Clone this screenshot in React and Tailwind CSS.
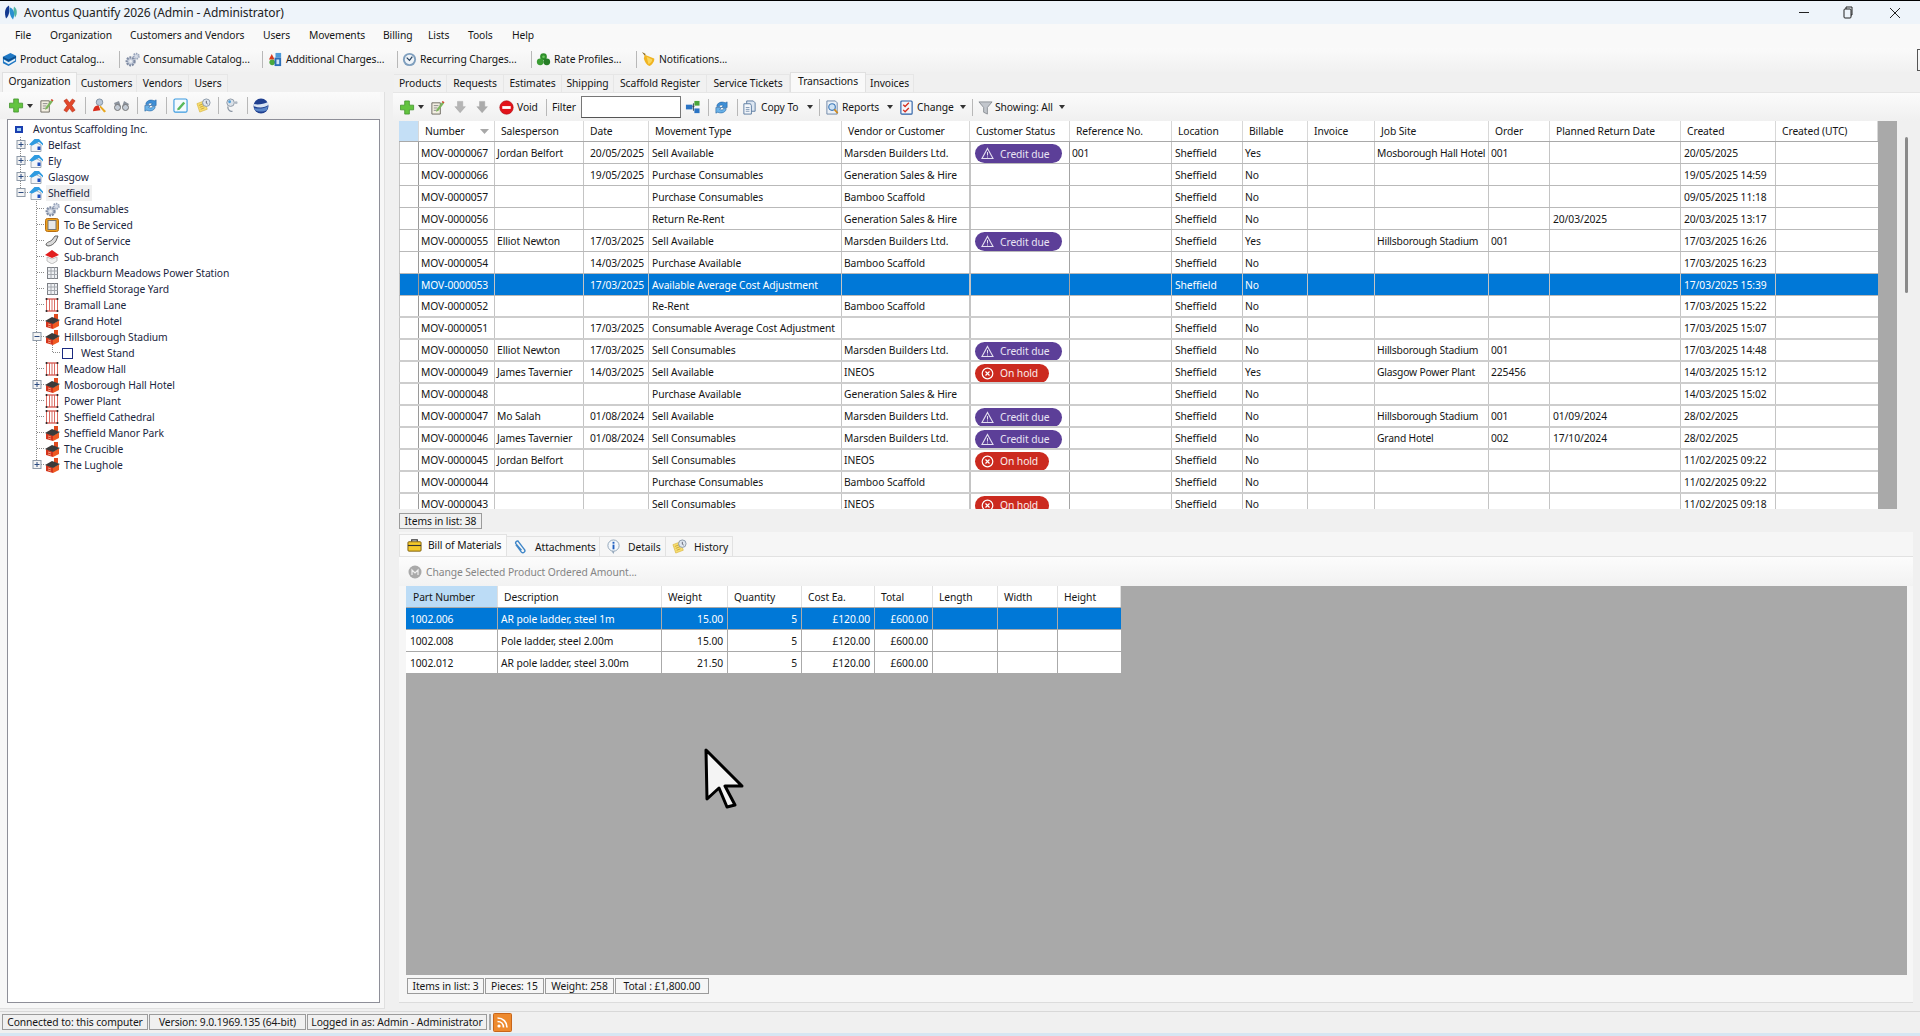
import React from 'react';

const S = ({ w = 15, h = 15, vb = '0 0 16 16', children }) => (
  <svg width={w} height={h} viewBox={vb} className="shrink-0 block">{children}</svg>
);

const Logo = () => <S w={16} h={17}><path d="M6 1C2 3 1 8 3 14c3-2 4-8 3-13z" fill="#12388f"/><path d="M7 3c3 1 6 5 3 12-3-3-4-8-3-12z" fill="#2a8fd0"/><path d="M11 2c3 2 4 7 1 11-1-3-2-8-1-11z" fill="#4fb3a2"/></S>;
const Book = () => <S><path d="M1 5l8-4 6 3v6l-8 5-6-3z" fill="#1f78c4"/><path d="M1 5l6 3 8-4v2L7 10 1 7z" fill="#0c4f8e"/><path d="M2 8l5 3 7-4v2l-7 4-5-3z" fill="#e8f1f8"/></S>;
const Gears = () => <S><circle cx="6" cy="10" r="4.2" fill="#c5cddb" stroke="#7f8ba3" strokeWidth="2.4" strokeDasharray="2 1"/><circle cx="12" cy="4.5" r="2.8" fill="#d5dbe6" stroke="#98a4bb" strokeWidth="2" strokeDasharray="1.5 1"/><circle cx="6" cy="10" r="1.4" fill="#eef1f5"/></S>;
const Shapes = () => <S><path d="M1 8l3-6 3 6z" fill="#d93a1e"/><path d="M8 1h6v5H8z" fill="#4d9ad8"/><circle cx="4.5" cy="11" r="3" fill="#4aa83c"/><path d="M7 6h7v9H7z" fill="#2c6fb8"/><path d="M9 8h3v5H9z" fill="#cfe3f5"/></S>;
const Clock = () => <S><circle cx="8" cy="8" r="7" fill="#7f9fbe"/><circle cx="8" cy="8" r="5" fill="#eef3f8"/><path d="M5 6l3 3 3-4" fill="none" stroke="#27425f" strokeWidth="1.3"/></S>;
const Clover = () => <S><circle cx="8" cy="5" r="3.6" fill="#2f8f2c"/><circle cx="4.5" cy="10.5" r="3.6" fill="#3a9c33"/><circle cx="11.5" cy="10.5" r="3.6" fill="#267d26"/><circle cx="8" cy="5" r="1.4" fill="#6cc85e"/></S>;
const Bell = () => <S><path d="M1 0l4 2-1 2z" fill="#8a6a20"/><path d="M4 3l10 4c1 2-2 7-5 8-3-1-5-4-6-8z" fill="#f0b422"/><path d="M6 5l6 3c0 2-2 4-4 5z" fill="#fad65c"/></S>;
const Plus = () => <S w={15} h={15}><path d="M5 1h5v4.500h4.500v5H10V15H5v-4.500H.5v-5H5z" fill="#63c440" stroke="#3b8f26" strokeWidth=".8"/></S>;
const Caret = () => <svg width="6" height="4" viewBox="0 0 6 4" className="shrink-0 block"><path d="M0 0h6L3 4z" fill="#333"/></svg>;
const EditNote = () => <S><path d="M2 3h9v12H2z" fill="#f3efe2" stroke="#6d6a60"/><path d="M4 6h5M4 8.500h4M4 11h3" stroke="#888"/><path d="M7 10l6-8 2 1.500-6 8-2.500 1z" fill="#7cb55c"/><path d="M12.500 2l1-1 2 1.500-1 1z" fill="#d6412a"/></S>;
const RedX = () => <S><path d="M2 3l3-2 3 4 3-4 3 2-3.500 5L14 13l-3 2-3-4-3 4-3-2 3.500-5z" fill="#e2482b" stroke="#b22d15" strokeWidth=".6"/></S>;
const UserSearch = () => <S><circle cx="8" cy="4.500" r="3.500" fill="#b8c6d6" stroke="#7f8fa1"/><path d="M1 14c1-5 3-6 6-6l2 5z" fill="#d92d1c"/><path d="M9 8l6 6-2 1.500-5-6z" fill="#e9a71e"/></S>;
const Binoc = () => <S w={17} h={13} vb="0 0 17 13"><path d="M1 4l5-2 2 6-4 3zM16 5l-5-3-2 6 3 3z" fill="#8b929c"/><circle cx="4.500" cy="8.500" r="3" fill="#c4ccd6" stroke="#777"/><circle cx="12.500" cy="8.500" r="3" fill="#c4ccd6" stroke="#777"/></S>;
const Refresh = () => <S><path d="M3 7c0-4 5-6 9-4l2-1v6h-6l2-2c-2-1-4-1-4 1z" fill="#3f8fd6" stroke="#1d5f9e" strokeWidth=".6"/><path d="M13 9c0 4-5 6-9 4l-2 1V8h6l-2 2c2 1 4 1 4-1z" fill="#6ab2e8" stroke="#1d5f9e" strokeWidth=".6"/></S>;
const EditBlue = () => <S><rect x="1" y="1" width="14" height="14" rx="1.500" fill="#f4fafe" stroke="#3a9ae0" strokeWidth="1.200"/><path d="M5 11l6-7 2 1.500-6 7-2.500.5z" fill="#58b85a"/></S>;
const NoteClock = () => <S><path d="M1 6l8-3 3 9-8 3z" fill="#f7de72" stroke="#d5ab2a" strokeWidth=".6"/><path d="M3 8l5-2M4 10l5-2M5 12l4-1.500" stroke="#b8901c" strokeWidth=".7"/><circle cx="11" cy="5" r="4" fill="#dfe6ee" stroke="#8a97a8"/><path d="M11 3v2.500l1.500 1" stroke="#445" fill="none" strokeWidth=".8"/></S>;
const Steth = () => <S><circle cx="7" cy="5" r="4" fill="#dbe1e8" stroke="#8c96a3"/><path d="M4 9c0 4 3 6 5 5" stroke="#8c96a3" fill="none" strokeWidth="1.400"/><circle cx="13" cy="5" r="1.500" fill="#aeb7c2"/><circle cx="6" cy="4" r="1.500" fill="#55a0d8"/></S>;
const Globe = () => <S w={16} h={16}><circle cx="8" cy="8" r="7.500" fill="#1f3f8f"/><path d="M1 6c4 1 10 0 14-2l.5 3c-4 3-10 3-15 1z" fill="#d8e4f3"/><path d="M1 10c4 1 10 1 14-2l-1 4c-3 2-9 2-12 0z" fill="#5a86c8"/></S>;
const Down = ({ c = '#b5b5b5' }) => <S w={14} h={15}><path d="M4 1h6v6h3l-6 7-6-7h3z" fill={c} stroke="#a0a0a0" strokeWidth=".5"/></S>;
const Void = () => <S><circle cx="8" cy="8" r="7.200" fill="#e2131a" stroke="#a90d12" strokeWidth=".6"/><rect x="3.500" y="6.500" width="9" height="3" fill="#fff"/></S>;
const Net = () => <S><rect x="1" y="5" width="7" height="5" fill="#2a74c4"/><rect x="10" y="1" width="5.500" height="5" fill="#4aa53a"/><rect x="10" y="9" width="5.500" height="5" fill="#2a74c4"/><path d="M8 7h2M9 3.500v8" stroke="#345" fill="none"/></S>;
const CopyDoc = () => <S><path d="M5 1h7l2 2v9H5z" fill="#dce6f2" stroke="#5c7ba0"/><path d="M2 4h7l1 2v9H2z" fill="#f4f7fb" stroke="#5c7ba0"/><path d="M4 8h4M4 10h4M4 12h4" stroke="#7d95b3"/></S>;
const Reports = () => <S><path d="M2 1h9l2 2v12H2z" fill="#eaf0f7" stroke="#6f88a8"/><circle cx="7.500" cy="7.500" r="3.500" fill="#cfe3f5" stroke="#3c78b8" strokeWidth="1.200"/><path d="M10 10l3.500 4" stroke="#d08a1e" strokeWidth="1.800"/></S>;
const Change = () => <S><rect x="2" y="1" width="12" height="14" rx="1" fill="#f4f6fa" stroke="#2a5fa5" strokeWidth="1.200"/><path d="M4.500 5l2 2 4-4M4.500 10.500l2 2 4-4" fill="none" stroke="#d52d1f" strokeWidth="1.400"/></S>;
const Funnel = () => <S><path d="M1 2h14l-5 6v7l-4-2V8z" fill="#c2c6cc" stroke="#7a7f86" strokeWidth=".8"/></S>;

const House = () => <S w={14} h={14} vb="0 0 14 14"><path d="M2 7.500l5-3 5 2.500v6.500H2z" fill="#f2f5f8" stroke="#8b98a6" strokeWidth=".8"/><path d="M0 6.500L5.500 1H10l4 4.500V7.500L10 4 3 7.500z" fill="#2f9be0"/><rect x="8.500" y="8.500" width="3" height="3.500" fill="#1d4fc0"/></S>;
const ToService = () => <S w={14} h={14} vb="0 0 14 14"><rect x=".5" y=".5" width="13" height="13" rx="2" fill="#eda01e" stroke="#b96f10"/><rect x="3" y="2.500" width="8" height="9" fill="#e8e8e8" stroke="#777"/></S>;
const OutService = () => <S w={14} h={14} vb="0 0 14 14"><path d="M1 11c0-3 4-3 6-5l3-4h3l-2 5c-2 3-5 5-8 5z" fill="#d8d8d8" stroke="#555" strokeWidth=".9"/></S>;
const SubBranch = () => <S w={14} h={14} vb="0 0 14 14"><path d="M2 7l5 2 5-2v4l-5 3-5-3z" fill="#f0f0f0" stroke="#aaa" strokeWidth=".7"/><path d="M7 0l7 5-7 3-7-3z" fill="#e21f1f"/></S>;
const Storage = () => <S w={14} h={14} vb="0 0 14 14"><rect x="2.500" y="1.500" width="10" height="11" fill="#eef0f3" stroke="#7c7f85"/><path d="M2.500 5h10M2.500 8.500h10M6 1.500v11M9.500 1.500v11" stroke="#a4a8ae"/></S>;
const Scaffold = () => <S w={14} h={14} vb="0 0 14 14"><path d="M1.500 1h11M1.500 13h11" stroke="#c8241a" strokeWidth="1.200"/><path d="M1.500 1v12M4.500 1v12M7 1v12M9.500 1v12M12.500 1v12" stroke="#d65a50" strokeWidth=".9"/><circle cx="1.500" cy="1" r="1" fill="#222"/><circle cx="12.500" cy="1" r="1" fill="#222"/><circle cx="1.500" cy="13" r="1" fill="#222"/><circle cx="12.500" cy="13" r="1" fill="#222"/></S>;
const Hotel = () => <S w={15} h={15} vb="0 0 15 15"><rect x="9" y="0" width="4" height="5" fill="#e04a1e"/><path d="M1 7l7 2.500V15l-7-2z" fill="#d5341c"/><path d="M8 9.500l6-3V12l-6 3z" fill="#ee5a22"/><path d="M0 7l7-4 8 3-7 4z" fill="#3a3a3a"/><path d="M3 10l3 1M3 12l3 1" stroke="#f7c9a8" strokeWidth=".7"/></S>;
const Root = () => <svg width="8" height="7" viewBox="0 0 8 7" className="block shrink-0"><rect width="8" height="7" fill="#1a3fb0"/><rect x="2" y="2" width="4" height="3" fill="#9fd0f5"/></svg>;
const WestBox = () => <svg width="11" height="11" viewBox="0 0 11 11" className="block shrink-0"><rect x=".5" y=".5" width="10" height="10" fill="#fff" stroke="#1a2a80"/></svg>;

const Briefcase = () => <S><path d="M5 4V2h6v2" fill="none" stroke="#333" strokeWidth="1.200"/><rect x="1" y="4" width="14" height="10" rx="1" fill="#f4c92a" stroke="#7a5c10"/><path d="M1 8h14" stroke="#333" strokeWidth="1.200"/></S>;
const Clip = () => <S><path d="M3 6l6 8c2 2 5-1 3-3L6 3C5 1 2 3 3 5l6 7" fill="none" stroke="#3f86c8" strokeWidth="1.500"/></S>;
const Info = () => <S><circle cx="8" cy="7" r="6" fill="#f3f7fb" stroke="#8fa3b8"/><rect x="7" y="6" width="2" height="5" fill="#1f5fc0"/><rect x="7" y="3" width="2" height="2" fill="#1f5fc0"/><path d="M6 13l2 3 1-3z" fill="#8fa3b8"/></S>;
const Rss = () => <svg width="19" height="19" viewBox="0 0 19 19" className="block shrink-0"><rect x=".5" y=".5" width="18" height="18" rx="1" fill="#ee8a2e" stroke="#c9661a"/><circle cx="6" cy="13" r="1.600" fill="#fff"/><path d="M4.500 8.500c3.500 0 6 2.500 6 6M4.500 5c5.500 0 9.500 4 9.500 9.500" fill="none" stroke="#fff" strokeWidth="1.600"/></svg>;

const Sep = ({ cls }) => <div className={`w-px h-[17px] bg-[#b8b8b8] shrink-0 ${cls}`} />;

const TopTool = ({ icon, text, cls }) => (
  <div className={`flex items-center shrink-0 ${cls}`}>
    {icon}
    <span className="ml-[3px] whitespace-nowrap">{text}</span>
  </div>
);

const menus = [
  ['File', 'w-[35px]'], ['Organization', 'w-[80px]'], ['Customers and Vendors', 'w-[133px]'], ['Users', 'w-[46px]'],
  ['Movements', 'w-[74px]'], ['Billing', 'w-[45px]'], ['Lists', 'w-[40px]'], ['Tools', 'w-[44px]'], ['Help', 'w-[40px]'],
];

const leftTabs = [
  ['Organization', 'w-[75px]', true], ['Customers', 'w-[60px]'], ['Vendors', 'w-[52px]'], ['Users', 'w-[39px]'],
];
const rightTabs = [
  ['Products', 'w-[53px]'], ['Requests', 'w-[57px]'], ['Estimates', 'w-[58px]'], ['Shipping', 'w-[52px]'],
  ['Scaffold Register', 'w-[93px]'], ['Service Tickets', 'w-[83px]'], ['Transactions', 'w-[76px]', true], ['Invoices', 'w-[48px]'],
];

const Tab = ({ label, w, active }) => (
  <div className={`${w} shrink-0 flex items-center justify-center border-r border-[#dedede] whitespace-nowrap ${active ? 'h-[20px] bg-[#f9f9f9] border-t border-l border-[#e0e0e0] pb-[3px]' : 'h-[18px] bg-[#f1f1f1] border-t border-[#e6e6e6]'}`}>{label}</div>
);

const Guide = ({ w, children }) => (
  <svg width={w} height="16" viewBox={`0 0 ${w} 16`} className="block shrink-0">{children}</svg>
);
const dot = { stroke: '#8a8a8a', strokeDasharray: '1 1', fill: 'none' };
const Box = ({ x, open }) => (
  <g>
    <rect x={x + 0.5} y="3.500" width="8" height="8" fill="#f4f4f4" stroke="#8e9aa8" />
    <path d={open ? `M${x + 2} 7.500h5` : `M${x + 2} 7.500h5M${x + 4.500} 5v5`} stroke="#2b4a80" fill="none" />
  </g>
);

const Depth1 = ({ open, last, box = true }) => (
  <Guide w={21}>
    <path d={`M12.500 0V${last ? 3 : 16}`} {...dot} />
    <path d="M17 7.500h4" {...dot} />
    {box && <Box x={8.500} open={open} />}
  </Guide>
);
const Depth2 = ({ exp, open, last }) => (
  <Guide w={37}>
    <path d={`M28.500 0V${last ? 4 : 16}`} {...dot} />
    <path d="M29 7.500h7" {...dot} />
    {exp && <Box x={24.500} open={open} />}
  </Guide>
);
const Depth3 = () => (
  <Guide w={54}>
    <path d="M28.500 0V16" {...dot} />
    <path d="M44.500 0V7.500H53" {...dot} />
  </Guide>
);

const child = [
  [<Gears />, 'Consumables'], [<ToService />, 'To Be Serviced'], [<OutService />, 'Out of Service'], [<SubBranch />, 'Sub-branch'],
  [<Storage />, 'Blackburn Meadows Power Station'], [<Storage />, 'Sheffield Storage Yard'], [<Scaffold />, 'Bramall Lane'], [<Hotel />, 'Grand Hotel'],
];
const child2 = [
  [<Scaffold />, 'Meadow Hall'], [<Hotel />, 'Mosborough Hall Hotel', true], [<Scaffold />, 'Power Plant'], [<Scaffold />, 'Sheffield Cathedral'],
  [<Hotel />, 'Sheffield Manor Park'], [<Hotel />, 'The Crucible'],
];

const Tree = () => (
  <div className="flex-1 min-h-0 bg-white border border-[#8e8f98] pt-[1px] text-[#1a2540] leading-none">
    <div className="flex items-center h-[16px]"><div className="w-[7px] shrink-0" /><Root /><span className="ml-[10px] whitespace-nowrap">Avontus Scaffolding Inc.</span></div>
    {['Belfast', 'Ely', 'Glasgow'].map((t) => (
      <div key={t} className="flex items-center h-[16px]"><Depth1 /><House /><span className="ml-[5px]">{t}</span></div>
    ))}
    <div className="flex items-center h-[16px]"><Depth1 open last /><House /><span className="ml-[3px] bg-[#f0f0f0] px-[2px] h-[16px] flex items-center">Sheffield</span></div>
    {child.map(([ic, t]) => (
      <div key={t} className="flex items-center h-[16px]"><Depth2 /><div className="w-[14px] shrink-0 flex justify-center">{ic}</div><span className="ml-[5px] whitespace-nowrap">{t}</span></div>
    ))}
    <div className="flex items-center h-[16px]"><Depth2 exp open /><div className="w-[14px] shrink-0 flex justify-center"><Hotel /></div><span className="ml-[5px] whitespace-nowrap">Hillsborough Stadium</span></div>
    <div className="flex items-center h-[16px]"><Depth3 /><WestBox /><span className="ml-[8px] whitespace-nowrap">West Stand</span></div>
    {child2.map(([ic, t, exp]) => (
      <div key={t} className="flex items-center h-[16px]"><Depth2 exp={exp} /><div className="w-[14px] shrink-0 flex justify-center">{ic}</div><span className="ml-[5px] whitespace-nowrap">{t}</span></div>
    ))}
    <div className="flex items-center h-[16px]"><Depth2 exp last /><div className="w-[14px] shrink-0 flex justify-center"><Hotel /></div><span className="ml-[5px] whitespace-nowrap">The Lughole</span></div>
  </div>
);

const Credit = () => (
  <div className="ml-[4px] mt-[1px] w-[87px] h-[19px] rounded-full bg-[#5c3f98] text-[#e9e4f4] flex items-center pl-[6px] shrink-0">
    <svg width="13" height="13" viewBox="0 0 13 13" className="block shrink-0"><path d="M6.500 1.500l5.500 10H1z" fill="none" stroke="#e4dff0" strokeWidth="1.100"/><path d="M6.500 5v3.500M6.500 9.500v1" stroke="#e4dff0"/></svg>
    <span className="ml-[6px] pt-[1px] whitespace-nowrap">Credit due</span>
  </div>
);
const Hold = () => (
  <div className="ml-[4px] mt-[1px] w-[74px] h-[19px] rounded-full bg-[#cb2a1f] text-[#fbeeee] flex items-center pl-[6px] shrink-0">
    <svg width="13" height="13" viewBox="0 0 13 13" className="block shrink-0"><circle cx="6.500" cy="6.500" r="5.300" fill="none" stroke="#fff" strokeWidth="1.200"/><path d="M4.500 4.500l4 4M8.500 4.500l-4 4" stroke="#fff" strokeWidth="1.200"/></svg>
    <span className="ml-[6px] pt-[1px] whitespace-nowrap">On hold</span>
  </div>
);

const gridCols = 'grid grid-cols-[20px_76px_89px_65px_193px_128px_100px_102px_71px_65px_67px_114px_61px_131px_95px_102px]';
const headers = ['', 'Number', 'Salesperson', 'Date', 'Movement Type', 'Vendor or Customer', 'Customer Status', 'Reference No.', 'Location', 'Billable', 'Invoice', 'Job Site', 'Order', 'Planned Return Date', 'Created', 'Created (UTC)'];

const MS = 'Marsden Builders Ltd.', GS = 'Generation Sales & Hire', BS = 'Bamboo Scaffold';
const rows = [
  ['MOV-0000067', 'Jordan Belfort', '20/05/2025', 'Sell Available', MS, 'c', '001', 'Yes', 'Mosborough Hall Hotel', '001', '', '20/05/2025'],
  ['MOV-0000066', '', '19/05/2025', 'Purchase Consumables', GS, '', '', 'No', '', '', '', '19/05/2025 14:59'],
  ['MOV-0000057', '', '', 'Purchase Consumables', BS, '', '', 'No', '', '', '', '09/05/2025 11:18'],
  ['MOV-0000056', '', '', 'Return Re-Rent', GS, '', '', 'No', '', '', '20/03/2025', '20/03/2025 13:17'],
  ['MOV-0000055', 'Elliot Newton', '17/03/2025', 'Sell Available', MS, 'c', '', 'Yes', 'Hillsborough Stadium', '001', '', '17/03/2025 16:26'],
  ['MOV-0000054', '', '14/03/2025', 'Purchase Available', BS, '', '', 'No', '', '', '', '17/03/2025 16:23'],
  ['MOV-0000053', '', '17/03/2025', 'Available Average Cost Adjustment', '', '', '', 'No', '', '', '', '17/03/2025 15:39'],
  ['MOV-0000052', '', '', 'Re-Rent', BS, '', '', 'No', '', '', '', '17/03/2025 15:22'],
  ['MOV-0000051', '', '17/03/2025', 'Consumable Average Cost Adjustment', '', '', '', 'No', '', '', '', '17/03/2025 15:07'],
  ['MOV-0000050', 'Elliot Newton', '17/03/2025', 'Sell Consumables', MS, 'c', '', 'No', 'Hillsborough Stadium', '001', '', '17/03/2025 14:48'],
  ['MOV-0000049', 'James Tavernier', '14/03/2025', 'Sell Available', 'INEOS', 'h', '', 'Yes', 'Glasgow Power Plant', '225456', '', '14/03/2025 15:12'],
  ['MOV-0000048', '', '', 'Purchase Available', GS, '', '', 'No', '', '', '', '14/03/2025 15:02'],
  ['MOV-0000047', 'Mo Salah', '01/08/2024', 'Sell Available', MS, 'c', '', 'No', 'Hillsborough Stadium', '001', '01/09/2024', '28/02/2025'],
  ['MOV-0000046', 'James Tavernier', '01/08/2024', 'Sell Consumables', MS, 'c', '', 'No', 'Grand Hotel', '002', '17/10/2024', '28/02/2025'],
  ['MOV-0000045', 'Jordan Belfort', '', 'Sell Consumables', 'INEOS', 'h', '', 'No', '', '', '', '11/02/2025 09:22'],
  ['MOV-0000044', '', '', 'Purchase Consumables', BS, '', '', 'No', '', '', '', '11/02/2025 09:22'],
  ['MOV-0000043', '', '', 'Sell Consumables', 'INEOS', 'h', '', 'No', '', '', '', '11/02/2025 09:18'],
];

const Cell = ({ children, cls = 'pl-[2px]' }) => (
  <div className={`h-full border-r border-[#c4c4c4] flex items-center pt-[1px] whitespace-nowrap overflow-hidden ${cls}`}>{children}</div>
);

const Row = ({ r, i }) => {
  const sel = i === 6;
  return (
    <div className={`${gridCols} h-[22px] ${i >= 7 ? 'border-b-2 border-[#cdcdcd]' : 'border-b border-[#b9b9b9]'} ${sel ? 'bg-[#0078d7] text-white' : 'bg-white'}`}>
      <Cell cls="border-l border-l-[#c4c4c4] border-r-[#9a9a9a]" />
      <Cell>{r[0]}</Cell>
      <Cell>{r[1]}</Cell>
      <Cell cls="justify-end pr-[4px]">{r[2]}</Cell>
      <Cell cls="pl-[3px]">{r[3]}</Cell>
      <Cell>{r[4]}</Cell>
      <Cell cls="border-l border-l-[#c4c4c4] border-r-[#a4a4a4]">{r[5] === 'c' ? <Credit /> : r[5] === 'h' ? <Hold /> : null}</Cell>
      <Cell>{r[6]}</Cell>
      <Cell cls="pl-[3px]">Sheffield</Cell>
      <Cell>{r[7]}</Cell>
      <Cell />
      <Cell cls="pl-[2px] tracking-[-0.2px]">{r[8]}</Cell>
      <Cell>{r[9]}</Cell>
      <Cell cls="pl-[3px]">{r[10]}</Cell>
      <Cell cls="pl-[3px]">{r[11]}</Cell>
      <Cell cls="border-r-0" />
    </div>
  );
};

const bomCols = 'grid grid-cols-[92px_164px_66px_74px_73px_58px_65px_60px_63px]';
const bomHead = ['Part Number', 'Description', 'Weight', 'Quantity', 'Cost Ea.', 'Total', 'Length', 'Width', 'Height'];
const bom = [
  ['1002.006', 'AR pole ladder, steel 1m', '15.00', '5', '£120.00', '£600.00'],
  ['1002.008', 'Pole ladder, steel 2.00m', '15.00', '5', '£120.00', '£600.00'],
  ['1002.012', 'AR pole ladder, steel 3.00m', '21.50', '5', '£120.00', '£600.00'],
];

const BoxStat = ({ cls, children }) => (
  <div className={`h-[16px] border border-[#9b9b9b] flex items-center justify-center shrink-0 whitespace-nowrap ${cls}`}>{children}</div>
);

export default function App() {
  return (
    <div className="relative w-[1920px] h-[1036px] overflow-hidden flex flex-col bg-[#f0f0f0] text-[10.3px] tracking-[-0.08px] text-[#151515] font-['Noto_Sans','Liberation_Sans',sans-serif] leading-none">
      {/* Title bar */}
      <div className="h-[24px] shrink-0 border-t border-black bg-[#eef4fa] flex items-center pl-[3px]">
        <Logo />
        <span className="ml-[5px] text-[12px] text-[#222]">Avontus Quantify 2026 (Admin - Administrator)</span>
        <div className="ml-auto flex items-center">
          <div className="w-[10px] h-px bg-[#222]" />
          <svg width="11" height="13" viewBox="0 0 11 13" className="block ml-[34px]"><rect x="1" y="3" width="7" height="9" rx="1" fill="none" stroke="#222"/><path d="M3 3V1h6v8H8" fill="none" stroke="#222"/></svg>
          <svg width="12" height="12" viewBox="0 0 12 12" className="block ml-[35px] mr-[19px]"><path d="M1 1l10 10M11 1L1 11" stroke="#222"/></svg>
        </div>
      </div>
      {/* Menu */}
      <div className="h-[24px] shrink-0 bg-[#f9f9f9] flex items-center pl-[15px] pb-[1px]">
        {menus.map(([m, w]) => <div key={m} className={`${w} shrink-0 whitespace-nowrap`}>{m}</div>)}
      </div>
      {/* Toolbar */}
      <div className="h-[24px] shrink-0 bg-gradient-to-b from-[#fafafa] to-[#f1f1f1] flex items-center pl-[2px] pb-[1px]">
        <TopTool icon={<Book />} text="Product Catalog..." cls="w-[117px]" />
        <Sep />
        <TopTool icon={<Gears />} text="Consumable Catalog..." cls="w-[137px] ml-[5px]" />
        <Sep />
        <TopTool icon={<Shapes />} text="Additional Charges..." cls="w-[129px] ml-[5px]" />
        <Sep />
        <TopTool icon={<Clock />} text="Recurring Charges..." cls="w-[129px] ml-[4px]" />
        <Sep />
        <TopTool icon={<Clover />} text="Rate Profiles..." cls="w-[100px] ml-[4px]" />
        <Sep cls="mr-[4px]" />
        <TopTool icon={<Bell />} text="Notifications..." cls="w-[100px]" />
        <div className="ml-auto w-[3px] h-[22px] border-l border-y border-[#555]" />
      </div>
      {/* Main */}
      <div className="flex-1 min-h-0 flex">
        {/* Left */}
        <div className="w-[385px] shrink-0 flex flex-col">
          <div className="h-[20px] shrink-0 flex items-end pl-[2px]">
            {leftTabs.map(([l, w, a]) => <Tab key={l} label={l} w={w} active={a} />)}
          </div>
          <div className="flex-1 min-h-0 mb-[2px] flex flex-col border-r border-b border-[#e0e0e0] bg-[#f7f7f7] pb-[5px] pl-[7px] pr-[4px]">
            <div className="h-[27px] shrink-0 flex items-center -ml-[7px] pl-[9px] bg-gradient-to-b from-[#fbfbfb] to-[#f0f0f0]">
              <Plus />
              <div className="ml-[3px]"><Caret /></div>
              <div className="ml-[6px]"><EditNote /></div>
              <div className="ml-[8px]"><RedX /></div>
              <Sep cls="ml-[8px]" />
              <div className="ml-[6px]"><UserSearch /></div>
              <div className="ml-[6px]"><Binoc /></div>
              <Sep cls="ml-[7px]" />
              <div className="ml-[5px]"><Refresh /></div>
              <Sep cls="ml-[8px]" />
              <div className="ml-[6px]"><EditBlue /></div>
              <div className="ml-[8px]"><NoteClock /></div>
              <Sep cls="ml-[7px]" />
              <div className="ml-[5px]"><Steth /></div>
              <Sep cls="ml-[8px]" />
              <div className="ml-[5px]"><Globe /></div>
            </div>
            <Tree />
          </div>
        </div>
        {/* Right */}
        <div className="w-[1527px] ml-[8px] shrink-0 flex flex-col">
          <div className="h-[20px] shrink-0 flex items-end pl-[1px]">
            {rightTabs.map(([l, w, a]) => <Tab key={l} label={l} w={w} active={a} />)}
          </div>
          <div className="h-[29px] shrink-0 flex items-center pl-[7px] border-t border-[#e6e6e6] bg-gradient-to-b from-[#fbfbfb] to-[#f0f0f0]">
            <Plus />
            <div className="ml-[3px]"><Caret /></div>
            <div className="ml-[6px]"><EditNote /></div>
            <div className="ml-[9px]"><Down /></div>
            <div className="ml-[8px]"><Down c="#aaaaaa" /></div>
            <div className="ml-[9px]"><Void /></div>
            <span className="ml-[3px] w-[21px]">Void</span>
            <Sep cls="ml-[8px]" />
            <span className="ml-[5px] w-[23px]">Filter</span>
            <div className="ml-[6px] w-[100px] h-[22px] bg-white border border-[#777] border-b-[#555]" />
            <div className="ml-[4px]"><Net /></div>
            <Sep cls="ml-[8px]" />
            <div className="ml-[5px]"><Refresh /></div>
            <Sep cls="ml-[8px]" />
            <div className="ml-[4px]"><CopyDoc /></div>
            <span className="ml-[4px] w-[40px] whitespace-nowrap">Copy To</span>
            <div className="ml-[6px]"><Caret /></div>
            <Sep cls="ml-[6px]" />
            <div className="ml-[5px]"><Reports /></div>
            <span className="ml-[2px] w-[39px]">Reports</span>
            <div className="ml-[6px]"><Caret /></div>
            <div className="ml-[6px]"><Change /></div>
            <span className="ml-[3px] w-[37px]">Change</span>
            <div className="ml-[6px]"><Caret /></div>
            <Sep cls="ml-[6px]" />
            <div className="ml-[5px]"><Funnel /></div>
            <span className="ml-[2px] w-[60px] whitespace-nowrap">Showing: All</span>
            <div className="ml-[4px]"><Caret /></div>
          </div>
          {/* Transactions grid */}
          <div className="h-[388px] shrink-0 ml-[6px] flex">
            <div className="w-[1479px] shrink-0 overflow-hidden bg-white">
              <div className={`${gridCols} h-[21px] border-b border-[#a9a9a9] bg-white`}>
                {headers.map((h, i) => (
                  <div key={i} className={`h-full border-r border-[#d8d8d8] flex items-center pt-[1px] whitespace-nowrap overflow-hidden ${i === 0 ? 'bg-[#c4dff6]' : 'pl-[6px]'}`}>
                    {h}
                    {i === 1 && <svg width="9" height="5" viewBox="0 0 9 5" className="block ml-auto mr-[5px]"><path d="M0 0h9L4.500 5z" fill="#a8a8a8"/></svg>}
                  </div>
                ))}
              </div>
              {rows.map((r, i) => <Row key={r[0]} r={r} i={i} />)}
            </div>
            <div className="w-[19px] bg-[#a9a9a9] shrink-0" />
            <div className="w-[16px] shrink-0 bg-[#f0f0f0] pt-[16px] pl-[8px]">
              <div className="w-[3px] h-[156px] bg-[#8a8a8a] rounded-full" />
            </div>
          </div>
          {/* Items */}
          <div className="h-[23px] shrink-0 flex items-center ml-[6px] pt-[1px]">
            <BoxStat cls="w-[83px]">Items in list: 38</BoxStat>
          </div>
          {/* Lower */}
          <div className="flex-1 min-h-0 ml-[6px] mr-[7px] mb-[8px] flex flex-col border-b border-[#dcdcdc] bg-[#f6f6f6] pt-[3px]">
            <div className="h-[22px] shrink-0 flex items-end border-b border-[#e2e2e2]">
              <div className="w-[108px] h-[22px] shrink-0 flex items-center pl-[7px] bg-[#fbfbfb] border border-b-0 border-[#e2e2e2]"><Briefcase /><span className="ml-[6px] whitespace-nowrap">Bill of Materials</span></div>
              <div className="w-[93px] h-[20px] shrink-0 flex items-center pl-[6px] border-t border-r border-[#e2e2e2]"><Clip /><span className="ml-[7px] pt-[2px]">Attachments</span></div>
              <div className="w-[66px] h-[20px] shrink-0 flex items-center pl-[6px] border-t border-r border-[#e2e2e2]"><Info /><span className="ml-[7px] pt-[2px]">Details</span></div>
              <div className="w-[67px] h-[20px] shrink-0 flex items-center pl-[6px] border-t border-r border-[#e2e2e2]"><NoteClock /><span className="ml-[7px] pt-[2px]">History</span></div>
            </div>
            <div className="h-[29px] shrink-0 flex items-center pl-[9px] text-[#858585] bg-gradient-to-b from-[#fcfcfc] to-[#f2f2f2]">
              <svg width="14" height="14" viewBox="0 0 14 14" className="block"><circle cx="7" cy="7" r="6.500" fill="#a9a9a9"/><path d="M4 10V5l3 3 3-3v5" fill="none" stroke="#eee" strokeWidth="1.200"/></svg>
              <span className="ml-[4px] pt-[2px]">Change Selected Product Ordered Amount...</span>
            </div>
            <div className="h-[389px] shrink-0 ml-[7px] mr-[6px] bg-[#a9a9a9]">
              <div className={`${bomCols} w-[715px] h-[22px] bg-white border-b border-[#a9a9a9]`}>
                {bomHead.map((h, i) => (
                  <div key={h} className={`h-full flex items-center pt-[1px] border-r border-[#e0e0e0] ${i === 0 ? 'bg-[#bcdcf6] pl-[7px]' : 'pl-[6px]'}`}>{h}</div>
                ))}
              </div>
              {bom.map((r, i) => (
                <div key={r[0]} className={`${bomCols} w-[715px] h-[22px] border-b border-[#a9a9a9] ${i === 0 ? 'bg-[#0078d7] text-white' : 'bg-white'}`}>
                  <div className="h-full flex items-center pt-[1px] pl-[4px] border-r border-[#aaaaaa]">{r[0]}</div>
                  <div className="h-full flex items-center pt-[1px] pl-[3px] border-r border-[#aaaaaa] whitespace-nowrap">{r[1]}</div>
                  {[2, 3, 4, 5].map((k) => (
                    <div key={k} className="h-full flex items-center pt-[1px] justify-end pr-[4px] border-r border-[#aaaaaa]">{r[k]}</div>
                  ))}
                  <div className="h-full border-r border-[#aaaaaa]" />
                  <div className="h-full border-r border-[#aaaaaa]" />
                  <div className="h-full" />
                </div>
              ))}
            </div>
            <div className="flex items-center gap-[1px] ml-[8px] mt-[3px]">
              <BoxStat cls="w-[77px]">Items in list: 3</BoxStat>
              <BoxStat cls="w-[59px]">Pieces: 15</BoxStat>
              <BoxStat cls="w-[69px]">Weight: 258</BoxStat>
              <BoxStat cls="w-[94px]">Total : £1,800.00</BoxStat>
            </div>
          </div>
        </div>
      </div>
      {/* Status */}
      <div className="h-[22px] shrink-0 border-t border-[#d8d8d8] bg-[#f0f0f0] flex items-start pt-[2px] pl-[2px] gap-[1px]">
        <BoxStat cls="w-[146px]">Connected to: this computer</BoxStat>
        <BoxStat cls="w-[157px]">Version: 9.0.1969.135 (64-bit)</BoxStat>
        <BoxStat cls="w-[180px]">Logged in as: Admin - Administrator</BoxStat>
        <div className="ml-[1px] w-[2px] h-[16px] bg-[#aaaaaa]" />
        <div className="ml-[1px] -mt-[1px]"><Rss /></div>
      </div>
      <div className="h-[3px] shrink-0 bg-[#d6e6f3]" />
      {/* Mouse cursor overlay */}
      <svg width="80" height="100" viewBox="0 0 80 100" className="absolute left-[680px] top-[720px] block">
        <path d="M26 30L27 79L39 68L47 87L55 85L45 66L62 66Z" fill="#f4f4f4" stroke="#000" strokeWidth="3" strokeLinejoin="round"/>
      </svg>
    </div>
  );
}
